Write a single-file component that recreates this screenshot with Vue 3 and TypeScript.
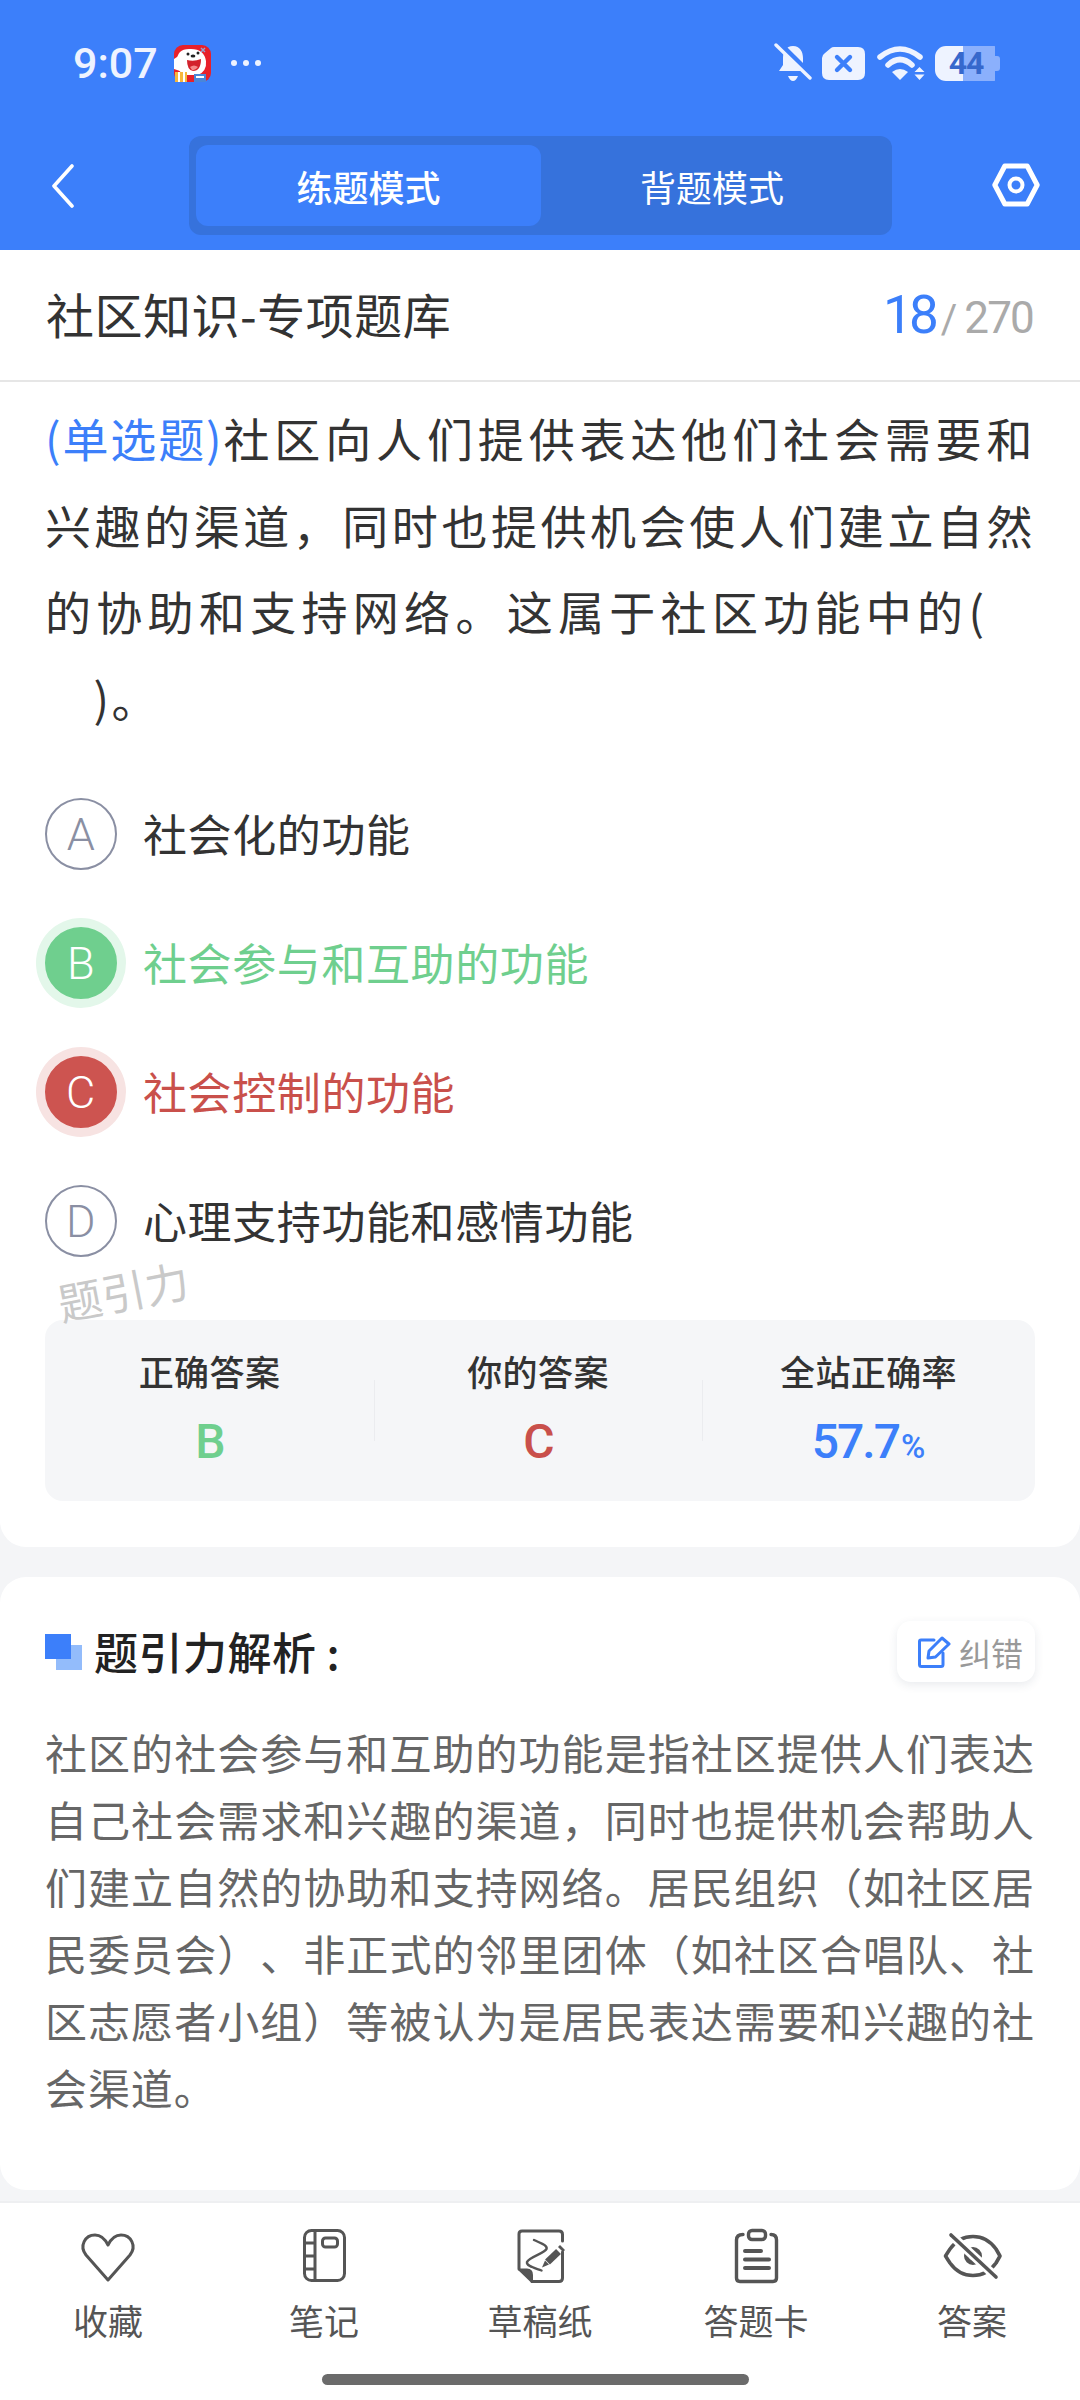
<script setup lang="ts">
interface Option { key: string; text: string; state: string }
interface Stat { label: string; value: string; unit?: string; tone: string }

const options: Option[] = [
  { key: 'A', text: '社会化的功能', state: '' },
  { key: 'B', text: '社会参与和互助的功能', state: 'right' },
  { key: 'C', text: '社会控制的功能', state: 'wrong' },
  { key: 'D', text: '心理支持功能和感情功能', state: '' },
]
const stats: Stat[] = [
  { label: '正确答案', value: 'B', tone: 'right' },
  { label: '你的答案', value: 'C', tone: 'wrong' },
  { label: '全站正确率', value: '57.7', unit: '%', tone: 'rate' },
]
</script>

<template>
  <div class="page">
    <header class="header">
      <div class="status">
        <span class="time">9:07</span>
        <svg class="app-icon" width="37" height="37" viewBox="0 0 37 37">
          <rect width="37" height="37" rx="9" fill="#e8202a" />
          <path d="M3 16 Q3 4 15 4 Q30 3 32 16 Q33 26 24 30 H10 Q3 26 3 16 Z" fill="#fff" />
          <path d="M0 14 L6 10 L6 26 L0 24 Z" fill="#fff" />
          <path d="M13 15 Q20 17 27 14 Q27 26 19 26 Q13 25 13 15 Z" fill="#d3222c" />
          <path d="M16 22 Q20 19 24 22 Q21 26 18 25 Z" fill="#f58a8a" />
          <circle cx="14" cy="9" r="1.500" fill="#222" />
          <circle cx="24" cy="8" r="1.500" fill="#222" />
          <ellipse cx="19" cy="11" rx="2.400" ry="1.500" fill="#222" />
          <path d="M27 3 L31 7 M31 3 L27 7" stroke="#8fa6d8" stroke-width="1.400" />
          <rect x="1" y="27" width="12" height="10" fill="#f6b73c" />
          <rect x="4" y="27" width="2" height="10" fill="#fff" />
          <rect x="9" y="27" width="2" height="10" fill="#fff" />
          <rect x="20" y="29" width="12" height="8" fill="#4a86d8" />
          <rect x="22" y="31" width="8" height="2" fill="#fff" />
        </svg>
        <span class="dots"><i></i><i></i><i></i></span>
        <span class="status-right">
          <svg width="38" height="40" viewBox="0 0 38 40">
            <path d="M19 3 C26 3 29 9 29 15 L29 22 L33 28 L5 28 L9 22 L9 15 C9 9 12 3 19 3 Z" fill="#eef3ff" />
            <path d="M14 33 H24 Q22 38 19 38 Q16 38 14 33 Z" fill="#eef3ff" />
            <path d="M3 -1 L37 33" stroke="#3c7ffa" stroke-width="7" />
            <path d="M2 2 L36 35" stroke="#eef3ff" stroke-width="3.400" stroke-linecap="round" />
          </svg>
          <svg width="43" height="35" viewBox="0 0 43 35">
            <path d="M12 1 H36 Q43 1 43 8 V27 Q43 34 36 34 H7 Q0 34 0 27 V12 Q0 9 3 7 L9 2 Q10 1 12 1 Z" fill="#eef3ff" />
            <path d="M15 11 L28 24 M28 11 L15 24" stroke="#3c7ffa" stroke-width="4.400" stroke-linecap="round" />
          </svg>
          <svg class="wifi" width="48" height="35" viewBox="0 0 48 35">
            <path d="M3 11 Q23 -5 43 11" fill="none" stroke="#eef3ff" stroke-width="5.500" stroke-linecap="round" />
            <path d="M11 19 Q23 8 35 19" fill="none" stroke="#eef3ff" stroke-width="5.500" stroke-linecap="round" />
            <path d="M15 26 Q23 20 31 26 L23 34 Z" fill="#eef3ff" />
            <path d="M42.500 21 L47.500 26 H37.500 Z M42.500 34 L47.500 28.500 H37.500 Z" fill="#eef3ff" />
          </svg>
          <span class="battery"><b>44</b></span>
        </span>
      </div>
      <nav class="nav">
        <svg class="back" width="26" height="44" viewBox="0 0 26 44">
          <path d="M22 2 L4 22 L22 42" fill="none" stroke="#fff" stroke-width="3.600" stroke-linecap="round" stroke-linejoin="round" />
        </svg>
        <div class="tabs">
          <span class="tab active">练题模式</span>
          <span class="tab second">背题模式</span>
        </div>
        <svg class="hex" width="48" height="44" viewBox="0 0 48 44">
          <path d="M2.800 22 L12.800 3 H35.200 L45.200 22 L35.200 41 H12.800 Z" fill="none" stroke="#fff" stroke-width="5" stroke-linejoin="round" />
          <circle cx="24" cy="22" r="6.500" fill="none" stroke="#fff" stroke-width="4" />
        </svg>
      </nav>
    </header>

    <main class="content">
      <section class="card question-card">
        <div class="title-row">
          <span class="title">社区知识-专项题库</span>
          <span class="count"><em>18</em><i>/</i><b>270</b></span>
        </div>
        <div class="body">
          <p class="question"><span class="kind">(单选题)</span>社区向人们提供表达他们社会需要和兴趣的渠道，同时也提供机会使人们建立自然<span class="wide">的协助和支持网络。这属于社区功能中的(</span><br />&emsp;)。</p>
          <ul class="options">
            <li v-for="o in options" :key="o.key" class="option" :class="o.state">
              <span class="bullet">{{ o.key }}</span>
              <span class="option-text">{{ o.text }}</span>
            </li>
          </ul>
          <span class="watermark">题引力</span>
          <div class="stats">
            <div v-for="s in stats" :key="s.label" class="stat">
              <span class="stat-label">{{ s.label }}</span>
              <span class="stat-value" :class="s.tone">{{ s.value }}<small v-if="s.unit">{{ s.unit }}</small></span>
            </div>
          </div>
        </div>
      </section>

      <section class="card analysis">
        <div class="analysis-head">
          <div class="analysis-title">
            <span class="squares"><i></i><i></i></span>
            <span>题引力解析<span class="colon">:</span></span>
          </div>
          <button class="fix" type="button">
            <svg width="33" height="32" viewBox="0 0 33 32">
              <path d="M16 4 H3 Q1.500 4 1.500 5.500 V28.500 Q1.500 30.500 3.500 30.500 H23 Q25 30.500 25 28.500 V17" fill="none" stroke="#3c7ffa" stroke-width="3" stroke-linecap="round" />
              <path d="M10 22 L11 15 L24 2 L31 8 L17.500 21 Z" fill="none" stroke="#3c7ffa" stroke-width="3" stroke-linejoin="round" />
            </svg>
            <span>纠错</span>
          </button>
        </div>
        <p class="explain">社区的社会参与和互助的功能是指社区提供人们表达自己社会需求和兴趣的渠道，同时也提供机会帮助人们建立自然的协助和支持网络。居民组织（如社区居民委员会）、非正式的邻里团体（如社区合唱队、社区志愿者小组）等被认为是居民表达需要和兴趣的社会渠道。</p>
      </section>
    </main>

    <footer class="bottom">
      <div class="actions">
        <div class="action">
          <svg width="64" height="56" viewBox="0 0 64 56" fill="none" stroke="#555" stroke-width="3">
            <path d="M32 52 L10 27 C3 18 9 7 19 7 C25 7 29 11 32 17 C35 11 39 7 45 7 C55 7 61 18 54 27 Z" stroke-linejoin="round" />
          </svg>
          <span>收藏</span>
        </div>
        <div class="action">
          <svg width="64" height="56" viewBox="0 0 64 56" fill="none" stroke="#555" stroke-width="3">
            <rect x="12.500" y="2.500" width="40" height="50" rx="7" />
            <path d="M23 2.500 V52.500 M12.500 15 H23 M12.500 28 H23 M12.500 41 H23" />
            <rect x="30.500" y="10" width="15" height="9" rx="3" />
          </svg>
          <span>笔记</span>
        </div>
        <div class="action">
          <svg width="64" height="56" viewBox="0 0 64 56" fill="none" stroke="#555" stroke-width="3">
            <path d="M24 53.500 H51 Q54.500 53.500 54.500 50 V24 M54.500 13 V6.500 Q54.500 3 51 3 H14 Q11 3 11 6 V41" stroke-linecap="round" />
            <path d="M11 41.500 H19 Q24 41.500 24 47 V54 Z" fill="#555" stroke-width="2" stroke-linejoin="round" />
            <path d="M26 12 C32 15 40 17 38.500 21 C37 25 21 29 19 34 C18 38 27 40 33.500 42.500" stroke-width="2.400" stroke-linecap="round" />
            <path d="M39.500 34 L50.500 23.500" stroke-width="7" />
            <path d="M52.500 21.500 L54.500 19.500" stroke-width="7" />
            <path d="M34 39.500 L37 32.500 L41 36.500 Z" fill="#555" stroke="none" />
          </svg>
          <span>草稿纸</span>
        </div>
        <div class="action">
          <svg width="64" height="56" viewBox="0 0 64 56" fill="none" stroke="#555">
            <path d="M19 6.500 Q12.500 6.500 12.500 12 V50 Q12.500 53.500 16 53.500 H49 Q52.500 53.500 52.500 50 V12 Q52.500 6.500 47 6.500" stroke-width="3.400" stroke-linecap="round" />
            <rect x="24.500" y="2.500" width="17" height="9" rx="3.500" stroke-width="3.400" />
            <path d="M21 23 H37 M21 31.500 H45 M21 40 H45" stroke-width="4" stroke-linecap="round" />
          </svg>
          <span>答题卡</span>
        </div>
        <div class="action">
          <svg width="64" height="56" viewBox="0 0 64 56" fill="none" stroke="#555" stroke-width="3.600">
            <path d="M5.500 28 Q8 24 10 21 Q19 8.500 33 8.500 Q47 8.500 56 21 L60 28 L56 35 Q47 47.500 33 47.500 Q19 47.500 10 35 Q8 32 5.500 28 Z" stroke-linejoin="round" />
            <circle cx="33" cy="28" r="6.500" stroke-width="5" />
            <path d="M11 7 L56 49" stroke="#fff" stroke-width="9" />
            <path d="M11 7 L56 49" stroke-linecap="round" />
          </svg>
          <span>答案</span>
        </div>
      </div>
      <div class="home-bar"></div>
    </footer>
  </div>
</template>

<style>
html, body { margin: 0; padding: 0; background: #f4f5f7; }
</style>

<style scoped>
.page {
  width: 1080px;
  height: 2400px;
  display: flex;
  flex-direction: column;
  overflow: hidden;
  background: #f4f5f7;
  font-family: "Noto Sans CJK SC", "Noto Sans", sans-serif;
  text-spacing-trim: space-all;
  color: #333;
}
.header { height: 250px; flex: none; background: #3c7ffa; }
.status {
  height: 126px;
  display: flex;
  align-items: center;
  padding: 0 80px 0 73px;
  color: #eef3ff;
}
.time { font: 500 43px/1 Roboto, sans-serif; margin-right: 16px; }
.app-icon { display: block; }
.dots { display: flex; gap: 6px; margin-left: 20px; }
.dots i { width: 6px; height: 6px; border-radius: 50%; background: #eef3ff; }
.status-right { margin-left: auto; display: flex; align-items: center; gap: 10px; }
.wifi { margin-left: 2px; }
.battery {
  position: relative;
  width: 65px;
  height: 35px;
  border-radius: 11px 6px 6px 11px;
  background: linear-gradient(90deg, #eef3ff 0 28px, #8bb0fc 28px 60px, transparent 60px);
  display: flex;
  align-items: center;
  justify-content: center;
}
.battery::after {
  content: "";
  position: absolute;
  right: 0;
  top: 10px;
  width: 5px;
  height: 15px;
  border-radius: 0 3px 3px 0;
  background: #8bb0fc;
}
.battery b { font: 700 32px/1 Roboto, sans-serif; color: #3668cc; letter-spacing: -1px; margin-right: 3px; }

.nav { height: 124px; display: flex; align-items: flex-start; padding: 10px 40px 0 50px; }
.back { margin-top: 28px; flex: none; }
.tabs {
  margin-left: 113px;
  width: 703px;
  height: 99px;
  box-sizing: border-box;
  padding: 9px 8px 9px 7px;
  border-radius: 12px;
  background: #3672dc;
  display: flex;
}
.tab {
  flex: 345px 0 0;
  display: flex;
  align-items: center;
  justify-content: center;
  font-size: 36px;
  color: #fff;
  border-radius: 12px;
}
.tab.active { background: #3c7ffa; font-weight: 500; }
.tab.second { padding-right: 3px; box-sizing: border-box; }
.hex { margin: 27px 0 0 100px; flex: none; }

.content { flex: none; }
.card { background: #fff; }
.question-card { border-radius: 0 0 26px 26px; padding-bottom: 46px; }
.title-row {
  height: 130px;
  border-bottom: 2px solid #e6e6e6;
  padding: 0 47px 0 46px;
  display: flex;
  align-items: center;
  justify-content: space-between;
}
.title { font-size: 48px; letter-spacing: 0.500px; color: #333; margin-top: -4px; }
.count { display: flex; align-items: baseline; font-family: Roboto, sans-serif; }
.count em { font: 400 53px/1 Roboto, sans-serif; color: #3c7ffa; letter-spacing: -4px; margin-right: 6px; }
.count i { font: 400 40px/1 Roboto, sans-serif; color: #aaa; margin-right: 7px; }
.count b { font: 400 44px/1 Roboto, sans-serif; color: #aaa; letter-spacing: -1.800px; }
.body { position: relative; padding: 12px 45px 0; }
.question {
  margin: 0;
  font-size: 46px;
  line-height: 86.600px;
  letter-spacing: 2.500px;
  text-align: justify;
  color: #333;
}
.kind { color: #3c7ffa; letter-spacing: -0.500px; }
.wide { letter-spacing: 5.300px; }
.options { list-style: none; margin: 58px 0 0; padding: 0; display: flex; flex-direction: column; gap: 57px; }
.option { display: flex; align-items: center; height: 72px; font-size: 44px; letter-spacing: 0.600px; color: #333; }
.option-text { margin-top: -3px; }
.bullet {
  width: 72px;
  height: 72px;
  flex: none;
  box-sizing: border-box;
  margin-right: 26px;
  border: 2px solid #8a8fa3;
  border-radius: 50%;
  display: flex;
  align-items: center;
  justify-content: center;
  color: #8a8fa3;
  font: 300 45px/1 Roboto, sans-serif;
}
.option.right { color: #6fcf8e; }
.option.right .bullet { background: #6fcf8e; border-color: #6fcf8e; color: #fff; box-shadow: 0 0 0 9px #e3f7ea; }
.option.wrong { color: #c9504b; }
.option.wrong .bullet { background: #cd5450; border-color: #cd5450; color: #fff; box-shadow: 0 0 0 9px #f7e3e2; }
.watermark {
  position: absolute;
  left: 57px;
  top: 886px;
  font-size: 44px;
  line-height: 1;
  color: #c9c9c9;
  transform: rotate(-11deg);
}
.stats {
  margin-top: 63px;
  height: 181px;
  border-radius: 18px;
  background: #f5f6f8;
  display: grid;
  grid-template-columns: 329px 328px 333px;
}
.stat {
  position: relative;
  display: flex;
  flex-direction: column;
  align-items: center;
  padding-top: 29px;
}
.stat + .stat::before {
  content: "";
  position: absolute;
  left: 0;
  top: 60px;
  height: 61px;
  width: 1px;
  background: #ebecef;
}
.stat-label { font-size: 35px; letter-spacing: 0.400px; font-weight: 500; line-height: 44px; color: #333; }
.stat-value { margin-top: 22px; font: 500 48px/54px Roboto, sans-serif; letter-spacing: -2px; }
.stat-value small { font-size: 33px; letter-spacing: 0; margin-left: 2px; }
.stat-value.right { color: #6fcf8e; }
.stat-value.wrong { color: #c9504b; }
.stat-value.rate { color: #3c7ffa; }

.analysis { margin-top: 30px; height: 613px; box-sizing: border-box; border-radius: 26px; padding: 44px 45px 0; }
.analysis-head { display: flex; align-items: center; justify-content: space-between; height: 61px; }
.analysis-title { display: flex; align-items: center; font-size: 44px; letter-spacing: 0.500px; font-weight: 500; color: #222; margin-top: -2px; }
.colon { margin-left: 10px; }
.squares { position: relative; width: 37px; height: 36px; margin-right: 12px; margin-top: 3px; }
.squares i { position: absolute; width: 26px; height: 25px; }
.squares i:first-child { left: 0; top: 0; background: #3c7ffa; z-index: 1; }
.squares i:last-child { left: 11px; top: 11px; background: #93bcfb; }
.fix {
  width: 138px;
  height: 61px;
  padding: 0 0 0 21px;
  border: 0;
  border-radius: 14px;
  background: #fff;
  box-shadow: 0 3px 10px rgba(40, 60, 90, 0.1);
  display: flex;
  align-items: center;
  gap: 8px;
  font-family: inherit;
  font-size: 32px;
  color: #999;
}
.explain {
  margin: 36px 0 0;
  font-size: 42px;
  line-height: 67px;
  letter-spacing: 0.900px;
  text-align: justify;
  color: #666;
}

.bottom { margin-top: auto; height: 199px; flex: none; box-sizing: border-box; border-top: 2px solid #eeeff1; background: #fff; }
.actions { display: grid; grid-template-columns: repeat(5, 216px); padding-top: 25px; }
.action { display: flex; flex-direction: column; align-items: center; font-size: 35px; color: #555; }
.action svg { display: block; }
.action span { margin-top: 16px; line-height: 40px; }
.home-bar { width: 427px; height: 11px; margin: 34px 0 0 322px; border-radius: 6px; background: #6b6b6b; }
</style>
